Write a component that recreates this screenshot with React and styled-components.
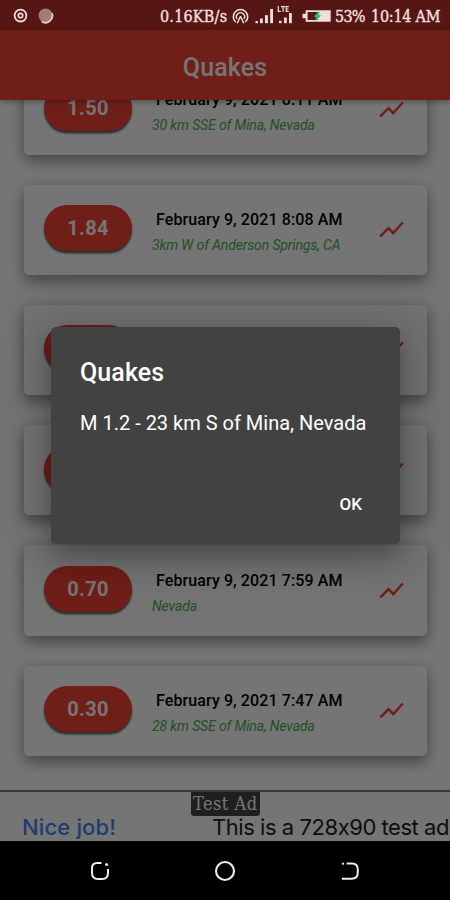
import React from "react";
import styled, { createGlobalStyle } from "styled-components";

const quakes = [
	{ id: 1, mag: "1.50", date: "February 9, 2021 8:11 AM", place: "30 km SSE of Mina, Nevada" },
	{ id: 2, mag: "1.84", date: "February 9, 2021 8:08 AM", place: "3km W of Anderson Springs, CA" },
	{ id: 3, mag: "1.20", date: "February 9, 2021 8:05 AM", place: "23 km S of Mina, Nevada" },
	{ id: 4, mag: "1.10", date: "February 9, 2021 8:02 AM", place: "Nevada" },
	{ id: 5, mag: "0.70", date: "February 9, 2021 7:59 AM", place: "Nevada" },
	{ id: 6, mag: "0.30", date: "February 9, 2021 7:47 AM", place: "28 km SSE of Mina, Nevada" }
];

const TrendIcon = () => (
	<svg width="29" height="29" viewBox="0 0 24 24">
		<path
			fill="#f44336"
			d="M3.5 18.49l6-6.01 4 4L22 6.92l-1.41-1.41-7.09 7.97-4-4L2 16.99z"
		/>
	</svg>
);

const NoticeIcons = () => (
	<svg width="42" height="18" viewBox="0 0 42 18" fill="none">
		<circle cx="7.5" cy="8.6" r="5.9" stroke="#f0dedd" strokeWidth="1.8" />
		<circle cx="7.5" cy="8.6" r="2.2" stroke="#f0dedd" strokeWidth="1.7" />
		<circle cx="32.6" cy="8.4" r="7" fill="#a87a78" />
		<path d="M39 6.2a7 7 0 0 1-10.5 8.2" stroke="#ead2d0" strokeWidth="1.7" />
	</svg>
);

const HotspotIcon = () => (
	<svg width="17" height="17" viewBox="0 0 17 17" fill="none" stroke="#f0dedd">
		<path d="M3.6 14a7.2 7.2 0 1 1 9.8 0" strokeWidth="1.5" />
		<path d="M5 11a4.1 4.1 0 1 1 7 0" strokeWidth="1.4" />
		<path d="M8.5 8.3L5.2 15.2M8.5 8.3l3.3 6.9" strokeWidth="1.5" />
	</svg>
);

const SignalIcons = () => (
	<svg width="39" height="20" viewBox="0 0 39 20" fill="#f0dedd">
		<rect x="0.5" y="15" width="2.4" height="2.2" />
		<rect x="5" y="12.5" width="2.8" height="4.7" />
		<rect x="10" y="9.2" width="2.9" height="8" />
		<rect x="15.2" y="3" width="2.8" height="14.2" />
		<rect x="24" y="14.8" width="2.6" height="2.4" />
		<rect x="29" y="11.5" width="2.8" height="5.7" />
		<rect x="34" y="7" width="2.8" height="10.2" />
		<path d="M23.3 0v5.4h2.5M26 0.6h4.2M28.1 0.6v5.4M31.2 6V0.6h2.6M31.2 3h2.2M31.2 5.4h2.6" fill="none" stroke="#f0dedd" strokeWidth="1.2" />
	</svg>
);

const BatteryIcon = () => (
	<svg width="30" height="14" viewBox="0 0 30 14">
		<path d="M0.5 4.8h3.2V1.2h25v11.6h-25V9.2H0.5z" fill="#f0dedd" />
		<rect x="5.6" y="3" width="10" height="8" fill="#561613" />
		<path d="M17 2.8l-4.6 4.6h2.4l-1 3.9 4.5-4.6h-2.2z" fill="#18c963" stroke="#18c963" />
	</svg>
);

const RecentsIcon = () => (
	<svg width="22" height="22" viewBox="0 0 22 22" fill="none" stroke="#eee" strokeWidth="2">
		<path d="M12.5 3H8.2Q3 3 3 8.2v4.6Q3 19 9 19h4.3Q19 19 19 12.8V9" />
		<circle cx="17.6" cy="4.6" r="1.5" fill="#eee" stroke="none" />
	</svg>
);

const HomeIcon = () => (
	<svg width="22" height="22" viewBox="0 0 22 22" fill="none" stroke="#eee" strokeWidth="2.1">
		<circle cx="11" cy="11" r="9" />
	</svg>
);

const BackIcon = () => (
	<svg width="22" height="22" viewBox="0 0 22 22" fill="none" stroke="#eee" strokeWidth="2">
		<path d="M7.6 3.6h5.2Q18.8 3.6 18.8 9.6v3Q18.8 18.8 12.8 18.8H2.8" />
		<rect x="2.9" y="2.8" width="2.2" height="1.8" fill="#eee" stroke="none" />
	</svg>
);

const App = () => {
	return (
		<>
			<GlobalStyle />
			<Phone>
				<StatusBar>
					<NoticeIcons />
					<StatusRight>
						<Speed>0.16KB/s</Speed>
						<StatusIcon $after={6}>
							<HotspotIcon />
						</StatusIcon>
						<StatusIcon $after={8}>
							<SignalIcons />
						</StatusIcon>
						<StatusIcon $after={3}>
							<BatteryIcon />
						</StatusIcon>
						<StatusText>53%</StatusText>
						<Clock>10:14 AM</Clock>
					</StatusRight>
				</StatusBar>
				<Screen>
					<AppBar>Quakes</AppBar>
					<List>
						{quakes.map(quake => (
							<Card key={quake.id}>
								<Magnitude>{quake.mag}</Magnitude>
								<Details>
									<When>{quake.date}</When>
									<Place>{quake.place}</Place>
								</Details>
								<TrendIcon />
							</Card>
						))}
					</List>
					<AdBanner>
						<AdPraise>Nice job!</AdPraise>
						<AdText>This is a 728x90 test ad</AdText>
						<AdBadge>Test Ad</AdBadge>
					</AdBanner>
					<Scrim>
						<Dialog>
							<DialogTitle>Quakes</DialogTitle>
							<DialogText>M 1.2 - 23 km S of Mina, Nevada</DialogText>
							<DialogButton>OK</DialogButton>
						</Dialog>
					</Scrim>
				</Screen>
				<NavBar>
					<RecentsIcon />
					<HomeIcon />
					<BackIcon />
				</NavBar>
			</Phone>
		</>
	);
};

export default App;

const GlobalStyle = createGlobalStyle`
	* {
		box-sizing: border-box;
	}

	body {
		margin: 0;
		background: #000000;
		font-family: Roboto, sans-serif;
	}

	svg {
		display: block;
		flex: none;
	}
`;

const Phone = styled.div`
	width: 450px;
	height: 900px;
	display: flex;
	flex-direction: column;
	overflow: hidden;
`;

const StatusBar = styled.header`
	height: 30px;
	flex: none;
	display: flex;
	align-items: center;
	justify-content: space-between;
	padding: 2px 9px 0 13px;
	background: #561613;
	color: #f0dedd;
`;

const StatusRight = styled.div`
	display: flex;
	align-items: center;
`;

const StatusIcon = styled.span`
	margin-right: ${props => props.$after}px;
`;

const StatusText = styled.span`
	width: 31px;
	font-family: "DejaVu Serif Condensed", "DejaVu Serif", serif;
	font-stretch: condensed;
	font-size: 16px;
	letter-spacing: -0.75px;
	white-space: nowrap;
	-webkit-text-stroke: 0.4px #f0dedd;
`;

const Speed = styled(StatusText)`
	width: 72px;
	letter-spacing: 0.2px;
`;

const Clock = styled(StatusText)`
	width: 70px;
	margin-left: 5px;
	letter-spacing: -0.25px;
`;

const Screen = styled.main`
	position: relative;
	height: 811px;
	flex: none;
	display: flex;
	flex-direction: column;
	background: #ffffff;
`;

const AppBar = styled.div`
	height: 70px;
	flex: none;
	display: flex;
	align-items: center;
	justify-content: center;
	padding-top: 4px;
	background: #f44336;
	color: #ffffff;
	font-size: 25px;
	font-weight: 500;
	letter-spacing: 0.1px;
	z-index: 1;
	box-shadow: 0 2px 5px rgba(0, 0, 0, 0.3);
`;

const List = styled.div`
	height: 690px;
	flex: none;
	display: flex;
	flex-direction: column;
	justify-content: flex-end;
	gap: 30px;
	padding: 0 23px 34px 24px;
	overflow: hidden;
`;

const Card = styled.article`
	height: 90.3px;
	flex: none;
	display: flex;
	align-items: center;
	padding: 0 21px 0 20px;
	border-radius: 5px;
	background: #ffffff;
	box-shadow: 0 7px 14px rgba(0, 0, 0, 0.3), 0 2px 16px rgba(0, 0, 0, 0.16);
`;

const Magnitude = styled.div`
	width: 88px;
	height: 46px;
	flex: none;
	display: flex;
	align-items: center;
	justify-content: center;
	margin-bottom: 3px;
	border-radius: 23px;
	background: #f44336;
	color: #ffffff;
	font-size: 20px;
	font-weight: 700;
	letter-spacing: 0.3px;
	box-shadow: 0 2.5px 2px rgba(0, 0, 0, 0.6);
`;

const Details = styled.div`
	flex: 1;
	display: flex;
	flex-direction: column;
	gap: 5px;
	padding: 6px 0 0 20px;
	white-space: nowrap;
`;

const When = styled.div`
	padding-left: 4px;
	color: #000000;
	font-size: 16px;
	line-height: 20px;
	font-weight: 500;
	letter-spacing: 0.1px;
`;

const Place = styled.div`
	color: #4caf50;
	font-size: 14px;
	line-height: 20px;
	font-style: italic;
	letter-spacing: -0.13px;
`;

const AdBanner = styled.footer`
	position: relative;
	flex: 1;
	display: flex;
	align-items: flex-end;
	padding: 0 0 0 22px;
	border-top: 2px solid #777777;
	overflow: hidden;
	white-space: nowrap;
	font-family: Inter, sans-serif;
	font-size: 22px;
	line-height: 28px;
`;

const AdPraise = styled.span`
	width: 190px;
	flex: none;
	color: #4285f4;
	font-weight: 500;
	letter-spacing: 0.15px;
`;

const AdText = styled.span`
	color: #202124;
	letter-spacing: -0.45px;
`;

const AdBadge = styled.span`
	position: absolute;
	top: 0;
	left: 191px;
	width: 69px;
	height: 24px;
	padding-left: 2px;
	border-radius: 0 0 3px 3px;
	background: #444444;
	color: #ffffff;
	font-family: "DejaVu Serif Condensed", "DejaVu Serif", serif;
	font-stretch: condensed;
	font-size: 18px;
	line-height: 24px;
	letter-spacing: 0.5px;
`;

const Scrim = styled.div`
	position: absolute;
	inset: 0;
	z-index: 2;
	display: flex;
	align-items: center;
	justify-content: center;
	background: rgba(0, 0, 0, 0.54);
`;

const Dialog = styled.section`
	width: 349px;
	height: 217px;
	display: flex;
	flex-direction: column;
	margin-left: 1px;
	padding: 31px 29px 0;
	border-radius: 5px;
	background: #424242;
	color: #ffffff;
	box-shadow: 0 12px 26px rgba(0, 0, 0, 0.3), 0 0 60px 20px rgba(0, 0, 0, 0.12);
`;

const DialogTitle = styled.h2`
	margin: 0;
	font-size: 25px;
	line-height: 30px;
	font-weight: 500;
	letter-spacing: 0.1px;
`;

const DialogText = styled.p`
	margin: 22px 0 0;
	font-size: 20px;
	line-height: 26px;
	white-space: nowrap;
`;

const DialogButton = styled.button`
	align-self: flex-end;
	margin: 56px 9px 0 0;
	padding: 0;
	border: 0;
	background: none;
	color: #ffffff;
	font-family: inherit;
	font-size: 17px;
	line-height: 24px;
	font-weight: 500;
`;

const NavBar = styled.nav`
	flex: 1;
	display: flex;
	justify-content: center;
	gap: 103px;
	padding-top: 19px;
	background: #000000;
`;
